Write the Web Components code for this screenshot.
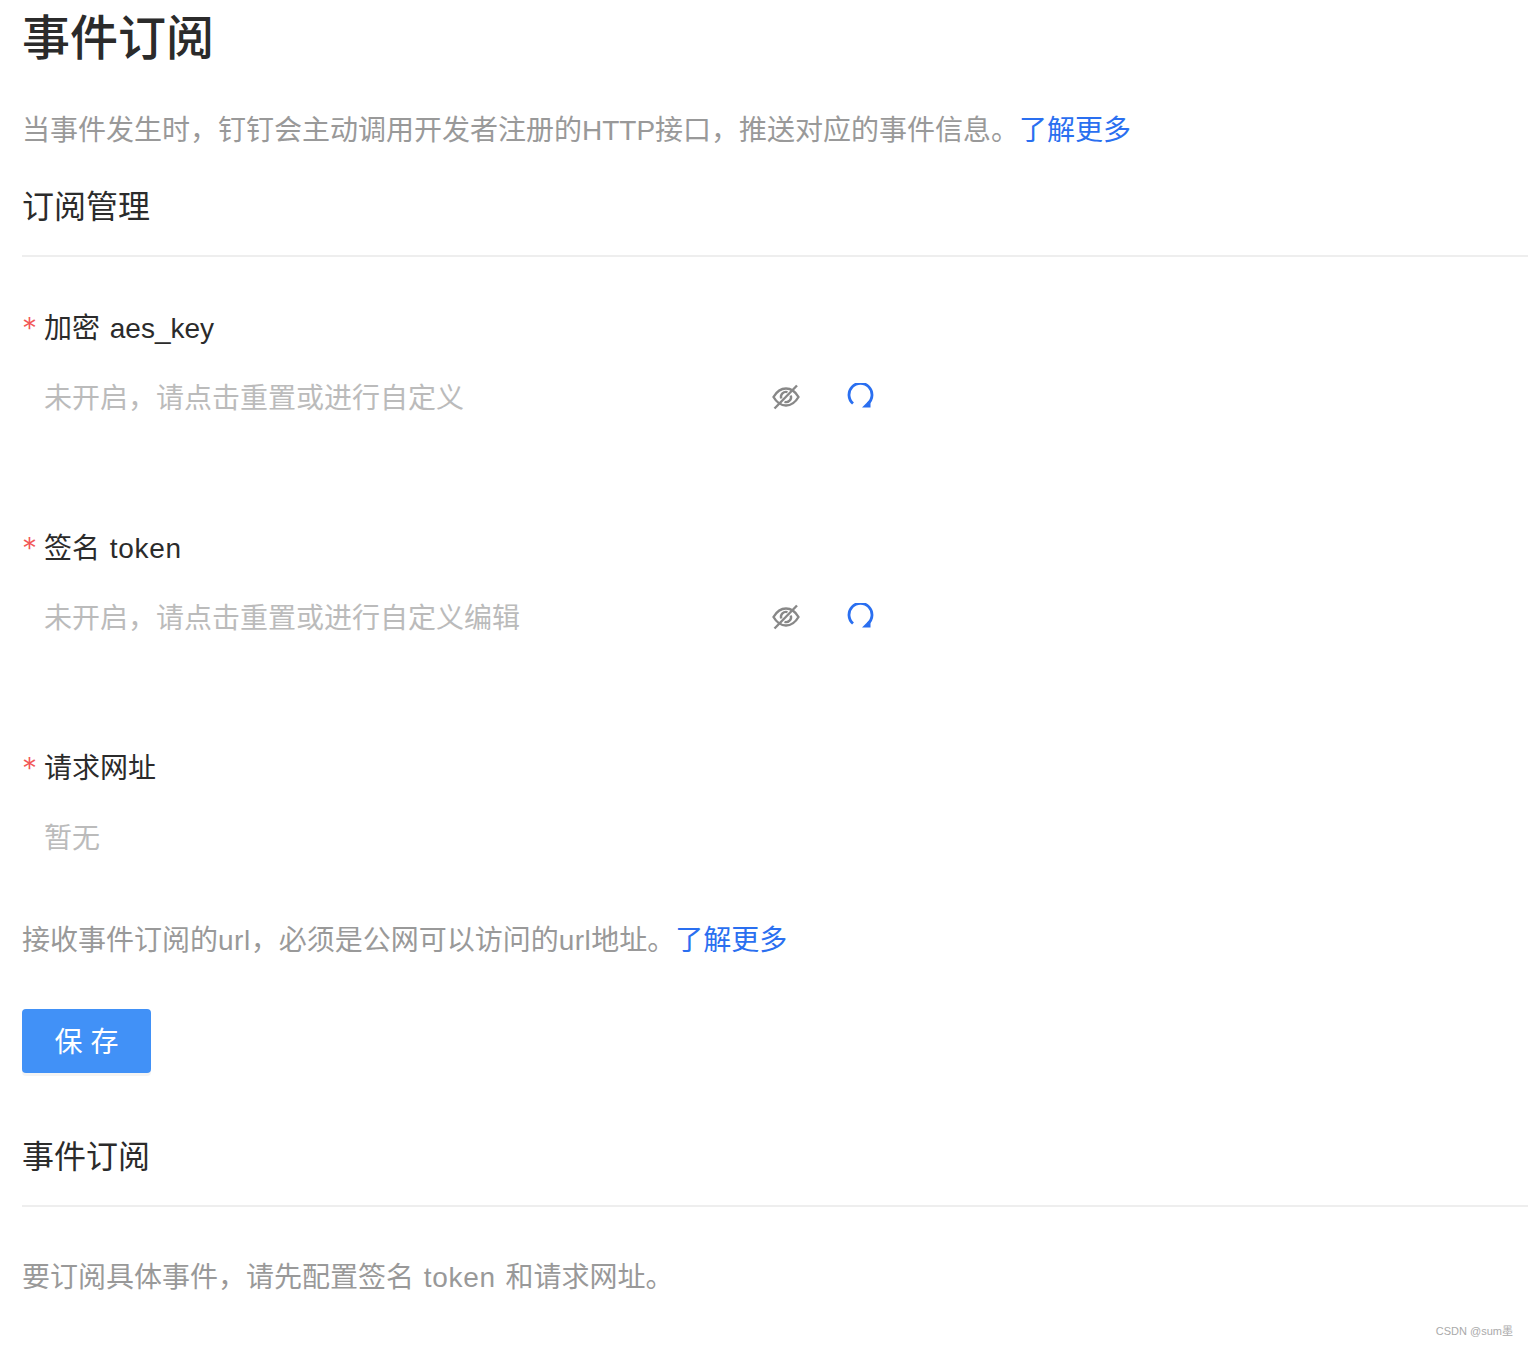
<!DOCTYPE html>
<html lang="zh-CN">
<head>
<meta charset="utf-8">
<title>事件订阅</title>
<style>
html,body{margin:0;padding:0;background:#fff}
body{font-family:"Liberation Sans","Noto Sans CJK SC",sans-serif;width:1528px;height:1346px;overflow:hidden}
.l{letter-spacing:.7px}
.u{letter-spacing:.5px}
</style>
</head>
<body>
<event-page>
  <page-title>事件订阅</page-title>
  <help-text style="--mt:31px">当事件发生时，钉钉会主动调用开发者注册的HTTP接口，推送对应的事件信息。<text-link>了解更多</text-link></help-text>
  <section-title style="--mt:32px">订阅管理</section-title>
  <form-item style="--mt:49px;--h:220px" icons><span slot="label">加密 aes_key</span>未开启，请点击重置或进行自定义</form-item>
  <form-item style="--h:220px" icons><span slot="label">签名 <span class="l">token</span></span>未开启，请点击重置或进行自定义编辑</form-item>
  <form-item style="--h:113px"><span slot="label">请求网址</span>暂无</form-item>
  <help-text style="--mt:60px">接收事件订阅的<span class="u">url</span>，必须是公网可以访问的<span class="u">url</span>地址。<text-link>了解更多</text-link></help-text>
  <save-button>保 存</save-button>
  <section-title style="--mt:62px">事件订阅</section-title>
  <help-text style="--mt:49px">要订阅具体事件，请先配置签名 <span class="l">token</span> 和请求网址。</help-text>
  <water-mark>CSDN @sum墨</water-mark>
</event-page>
<script>
function def(name, css, html, init){
  customElements.define(name, class extends HTMLElement{
    constructor(){
      super();
      const r=this.attachShadow({mode:"open"});
      r.innerHTML="<style>"+css+"</style>"+html;
    }
    connectedCallback(){ if(init) init(this); }
  });
}
def("event-page",":host{display:block;padding-left:22px}","<slot></slot>");
def("page-title",":host{display:block;font-size:48px;line-height:78px;font-weight:500;color:#2b2b2b}","<slot></slot>");
def("help-text",":host{display:block;margin-top:var(--mt,0);font-size:28px;line-height:44px;color:#999;word-spacing:2px}","<slot></slot>");
def("text-link",":host{display:inline;color:#2a6ff0}","<slot></slot>");
def("section-title",":host{display:block;margin-top:var(--mt,0);font-size:32px;line-height:44px;padding-bottom:26px;border-bottom:2px solid #eee;color:#2b2b2b}","<slot></slot>");
const eye='<svg width="28" height="28" viewBox="0 0 28 28" fill="none" stroke="#888" stroke-width="2.400"><path d="M1.500 14C5 8 9 5.500 14 5.500S23 8 26.500 14C23 20 19 22.500 14 22.500S5 20 1.500 14z"/><path d="M9.200 15.500A5 5 0 0 1 15.500 9.200M18.800 12.500A5 5 0 0 1 12.500 18.800"/><path d="M2.500 25.500L25 2.500"/></svg>';
const refresh='<svg width="28" height="28" viewBox="0 0 28 28" fill="none"><path d="M7 20.500A11.500 11.500 0 1 1 22 20.500" stroke="#2a6ff0" stroke-width="2.800"/><path d="M24.500 16v8.500H16z" fill="#2a6ff0"/></svg>';
def("form-item",
  ":host{display:block;margin-top:var(--mt,0);height:var(--h);box-sizing:border-box}"+
  ".label{display:flex;height:44px;line-height:46px;font-size:28px;color:#2b2b2b;word-spacing:2px}"+
  ".star{width:22px;font-family:Inter,sans-serif;font-size:30px;color:#f25757;position:relative;top:-1px;font-weight:300}"+
  ".input{display:flex;align-items:center;margin-top:25px;height:44px;padding-left:22px;font-size:28px;color:#bbb}"+
  ".text{width:728px;margin-bottom:2px}.icons{display:flex;gap:46px;align-items:center}",
  '<div class="label"><span class="star">*</span><span class="name"><slot name="label"></slot></span></div><div class="input"><span class="text"><slot></slot></span><span class="icons"></span></div>',
  el=>{
    if(el.hasAttribute("icons")) el.shadowRoot.querySelector(".icons").innerHTML=eye+refresh;
  });
def("save-button",":host{display:flex;align-items:center;justify-content:center;box-sizing:border-box;padding-bottom:2px;margin-top:46px;width:129px;height:64px;background:#4191f7;border-radius:4px;box-shadow:0 3px 0 rgba(0,0,0,.045);color:#fff;font-size:28px}","<slot></slot>");
def("water-mark",":host{display:block;margin-top:21px;padding-right:15px;text-align:right;font-size:11px;line-height:20px;color:#aaa}","<slot></slot>");
</script>
</body>
</html>
